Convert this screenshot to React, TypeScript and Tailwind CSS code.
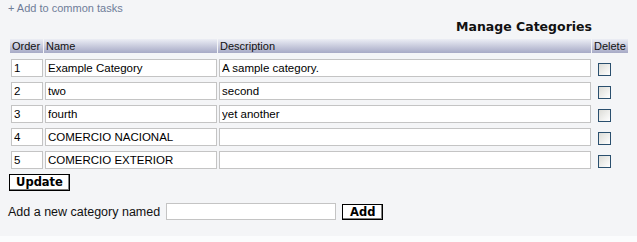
const rows = [
  { order: '1', name: 'Example Category', desc: 'A sample category.' },
  { order: '2', name: 'two', desc: 'second' },
  { order: '3', name: 'fourth', desc: 'yet another' },
  { order: '4', name: 'COMERCIO NACIONAL', desc: '' },
  { order: '5', name: 'COMERCIO EXTERIOR', desc: '' },
];

const head = 'bg-gradient-to-b from-[#eceef5] to-[#a7aac6] text-left font-normal text-[11px] leading-[14px] text-[#111] px-[2px] h-[14px] p-0';
const field =
  'block h-[18px] w-full border border-[#c4c4c4] bg-white px-[2px] text-[11.5px] leading-[16px] text-black outline-none';

export default function App() {
  return (
    <div className="h-[242px] w-[637px] overflow-hidden bg-[#f4f5f7] font-['Liberation_Sans',Arial,sans-serif]">
      <div className="h-[236px]">
        <div className="pl-[8px] pt-[2px] text-[11px] leading-[13px] text-[#6f7d99]">+ Add to common tasks</div>

        <div className="mt-[4px] pr-[45px] text-right font-['DejaVu_Sans',Verdana,sans-serif] text-[12.5px] font-bold leading-[16px] text-[#111]">
          Manage Categories
        </div>

        <table className="ml-[9px] mt-[4px] border-separate border-spacing-x-[1px] border-spacing-y-0">
          <thead>
            <tr>
              <th className={`${head} w-[33px]`}>Order</th>
              <th className={`${head} w-[173px]`}>Name</th>
              <th className={`${head} w-[373px]`}>Description</th>
              <th className={`${head} w-[33px]`}>Delete</th>
            </tr>
          </thead>
          <tbody>
            {rows.map((r, i) => {
              const pad = i === 0 ? 'pt-[6px]' : 'pt-[5px]';
              return (
                <tr key={r.order}>
                  <td className={`${pad} p-0 pl-[1px] leading-none`}>
                    <input className={`${field} w-[31px]`} defaultValue={r.order} />
                  </td>
                  <td className={`${pad} p-0 pl-[1px] leading-none`}>
                    <input className={field} defaultValue={r.name} />
                  </td>
                  <td className={`${pad} p-0 pl-[1px] leading-none`}>
                    <input className={field} defaultValue={r.desc} />
                  </td>
                  <td className={`${pad} p-0 leading-none`}>
                    <span className="ml-[6px] mt-[2px] block h-[13px] w-[13px] border border-[#2a4f6e] bg-gradient-to-br from-[#dcdcd7] to-[#ffffff]" />
                  </td>
                </tr>
              );
            })}
          </tbody>
        </table>

        <div className="ml-[9px] mt-[5px] leading-none">
          <button className="block h-[17px] w-[61px] border border-black bg-white font-['DejaVu_Sans',Verdana,sans-serif] text-[11.5px] font-bold leading-[15px] text-black shadow-[inset_-1px_-1px_0_#808080]">
            Update
          </button>
        </div>

        <div className="ml-[8px] mt-[12px] flex items-center text-[12.5px] leading-[16px] text-[#111]">
          <span>Add a new category named</span>
          <input className="ml-[6px] h-[17px] w-[170px] border border-[#c4c4c4] bg-white text-[12px] outline-none" />
          <button className="ml-[6px] h-[16px] w-[41px] border border-black bg-white font-['DejaVu_Sans',Verdana,sans-serif] text-[11.5px] font-bold leading-[14px] text-black shadow-[inset_-1px_-1px_0_#808080]">
            Add
          </button>
        </div>
      </div>
      <div className="h-[6px] bg-[#fbfcfd]" />
    </div>
  );
}
